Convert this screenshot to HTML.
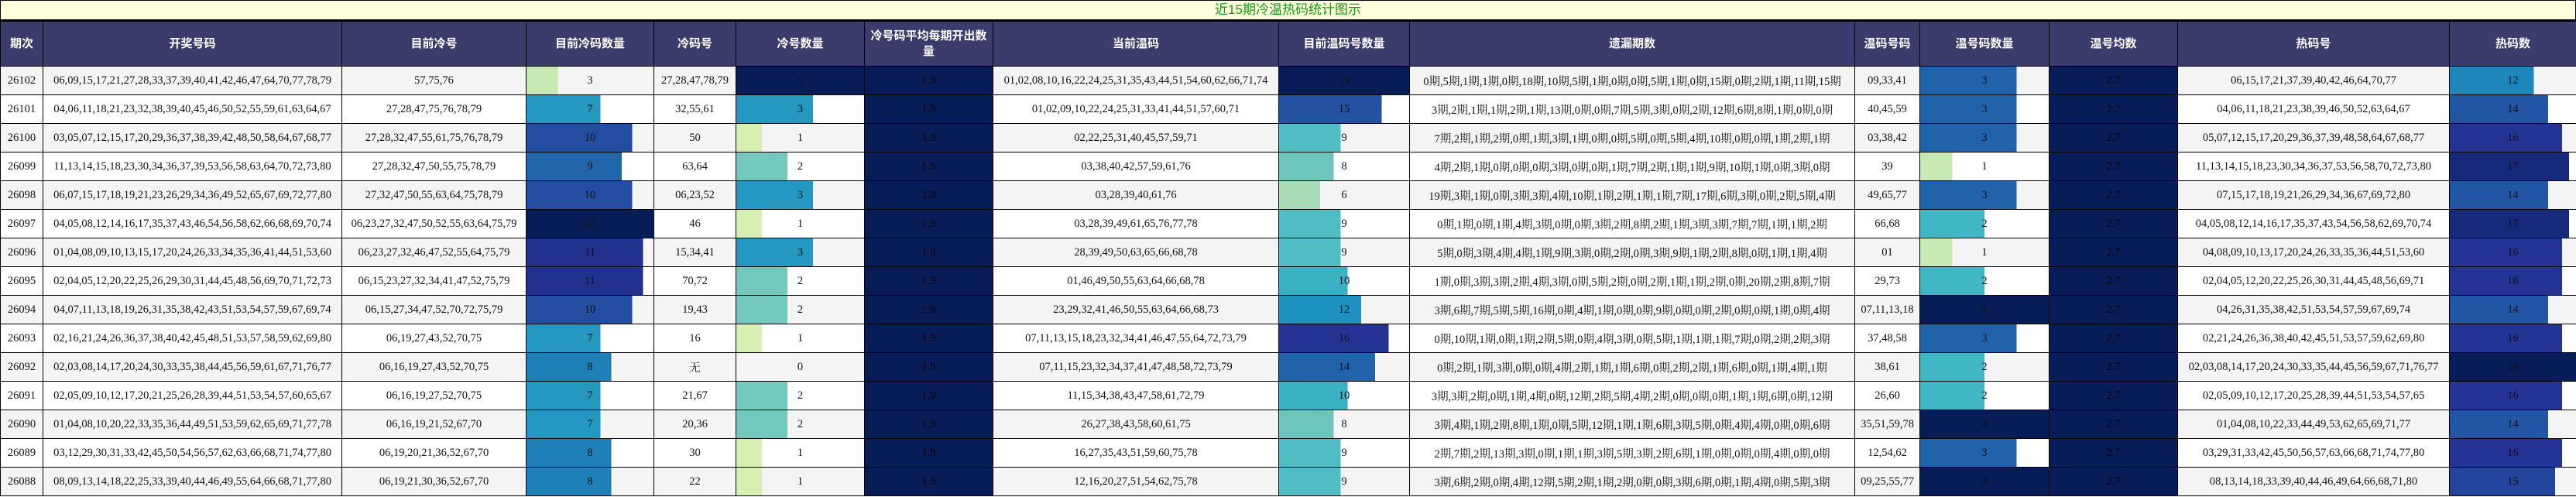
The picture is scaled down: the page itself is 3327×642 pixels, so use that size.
<!DOCTYPE html>
<html><head><meta charset="utf-8">
<style>
*{margin:0;padding:0;box-sizing:border-box}
body{width:3327px;height:642px;overflow:hidden;background:#fff;font-family:"Liberation Serif","Noto Serif CJK SC",serif}
.title{height:27px;background:#ffffdd;border:1px solid #000;border-bottom:2px solid #000;text-align:center;color:#119911;font:17px/24px "Liberation Sans","Noto Sans CJK SC",sans-serif}
table{border-collapse:collapse;table-layout:fixed;width:3327px}
th{height:58px;background:#3c3c6c;color:#fff;font:bold 15px/20px "Liberation Sans","Noto Sans CJK SC",sans-serif;border:1px solid #000;padding:0 4px}
td{height:37px;border:1px solid #000;text-align:center;font-size:14.5px;color:#111;white-space:nowrap;overflow:hidden;padding:0;background-repeat:no-repeat}
tr.g td{background-color:#f4f4f4}
tr.w td{background-color:#fff}
td.a{background-color:#081d58 !important;color:#000}
.c3{background-image:linear-gradient(90deg,#c7e9b4 25%,#0000 0)}
.c7{background-image:linear-gradient(90deg,#2498c1 58.3%,#0000 0)}
.c8{background-image:linear-gradient(90deg,#1f80b8 66.7%,#0000 0)}
.c9{background-image:linear-gradient(90deg,#2165ab 75%,#0000 0)}
.c10{background-image:linear-gradient(90deg,#234da0 83.3%,#0000 0)}
.c11{background-image:linear-gradient(90deg,#21318d 91.7%,#0000 0)}
.c12{background-image:linear-gradient(90deg,#081d58 100%,#0000 0)}
.n1{background-image:linear-gradient(90deg,#d6efb3 20%,#0000 0)}
.n2{background-image:linear-gradient(90deg,#73c9bd 40%,#0000 0)}
.n3{background-image:linear-gradient(90deg,#2498c1 60%,#0000 0)}
.n5{background-image:linear-gradient(90deg,#081d58 100%,#0000 0)}
.w6{background-image:linear-gradient(90deg,#a6dcb6 31.6%,#0000 0)}
.w8{background-image:linear-gradient(90deg,#6cc6be 42.1%,#0000 0)}
.w9{background-image:linear-gradient(90deg,#50bcc4 47.4%,#0000 0)}
.w10{background-image:linear-gradient(90deg,#3ab0c3 52.6%,#0000 0)}
.w12{background-image:linear-gradient(90deg,#1d91c0 63.2%,#0000 0)}
.w14{background-image:linear-gradient(90deg,#2163aa 73.7%,#0000 0)}
.w15{background-image:linear-gradient(90deg,#2352a3 78.9%,#0000 0)}
.w16{background-image:linear-gradient(90deg,#253494 84.2%,#0000 0)}
.w19{background-image:linear-gradient(90deg,#081d58 100%,#0000 0)}
.m1{background-image:linear-gradient(90deg,#c7e9b4 25%,#0000 0)}
.m2{background-image:linear-gradient(90deg,#41b6c4 50%,#0000 0)}
.m3{background-image:linear-gradient(90deg,#2163aa 75%,#0000 0)}
.m4{background-image:linear-gradient(90deg,#081d58 100%,#0000 0)}
.h12{background-image:linear-gradient(90deg,#1f86bb 66.7%,#0000 0)}
.h14{background-image:linear-gradient(90deg,#2255a4 77.8%,#0000 0)}
.h15{background-image:linear-gradient(90deg,#23449c 83.3%,#0000 0)}
.h16{background-image:linear-gradient(90deg,#253494 88.9%,#0000 0)}
.h17{background-image:linear-gradient(90deg,#17297a 94.4%,#0000 0)}
.h18{background-image:linear-gradient(90deg,#081d58 100%,#0000 0)}
</style></head><body>
<div class="title">近15期冷温热码统计图示</div>
<table>
<colgroup><col style="width:55px"><col style="width:386px"><col style="width:238px"><col style="width:165px"><col style="width:106px"><col style="width:166px"><col style="width:166px"><col style="width:369px"><col style="width:169px"><col style="width:575px"><col style="width:84px"><col style="width:167px"><col style="width:166px"><col style="width:351px"><col style="width:164px"></colgroup>
<tr><th>期次</th><th>开奖号码</th><th>目前冷号</th><th>目前冷码数量</th><th>冷码号</th><th>冷号数量</th><th>冷号码平均每期开出数量</th><th>当前温码</th><th>目前温码号数量</th><th>遗漏期数</th><th>温码号码</th><th>温号码数量</th><th>温号均数</th><th>热码号</th><th>热码数</th></tr>
<tr class="g"><td>26102</td><td>06,09,15,17,21,27,28,33,37,39,40,41,42,46,47,64,70,77,78,79</td><td>57,75,76</td><td class="c3">3</td><td>27,28,47,78,79</td><td class="n5">5</td><td class="a">1.9</td><td>01,02,08,10,16,22,24,25,31,35,43,44,51,54,60,62,66,71,74</td><td class="w19">19</td><td>0期,5期,1期,1期,0期,18期,10期,5期,1期,0期,0期,5期,1期,0期,15期,0期,2期,1期,11期,15期</td><td>09,33,41</td><td class="m3">3</td><td class="a">2.7</td><td>06,15,17,21,37,39,40,42,46,64,70,77</td><td class="h12">12</td></tr>
<tr class="w"><td>26101</td><td>04,06,11,18,21,23,32,38,39,40,45,46,50,52,55,59,61,63,64,67</td><td>27,28,47,75,76,78,79</td><td class="c7">7</td><td>32,55,61</td><td class="n3">3</td><td class="a">1.9</td><td>01,02,09,10,22,24,25,31,33,41,44,51,57,60,71</td><td class="w15">15</td><td>3期,2期,1期,1期,2期,1期,13期,0期,0期,7期,5期,3期,0期,2期,12期,6期,8期,1期,0期,0期</td><td>40,45,59</td><td class="m3">3</td><td class="a">2.7</td><td>04,06,11,18,21,23,38,39,46,50,52,63,64,67</td><td class="h14">14</td></tr>
<tr class="g"><td>26100</td><td>03,05,07,12,15,17,20,29,36,37,38,39,42,48,50,58,64,67,68,77</td><td>27,28,32,47,55,61,75,76,78,79</td><td class="c10">10</td><td>50</td><td class="n1">1</td><td class="a">1.9</td><td>02,22,25,31,40,45,57,59,71</td><td class="w9">9</td><td>7期,2期,1期,2期,0期,1期,3期,1期,0期,0期,5期,0期,5期,4期,10期,0期,0期,1期,2期,1期</td><td>03,38,42</td><td class="m3">3</td><td class="a">2.7</td><td>05,07,12,15,17,20,29,36,37,39,48,58,64,67,68,77</td><td class="h16">16</td></tr>
<tr class="w"><td>26099</td><td>11,13,14,15,18,23,30,34,36,37,39,53,56,58,63,64,70,72,73,80</td><td>27,28,32,47,50,55,75,78,79</td><td class="c9">9</td><td>63,64</td><td class="n2">2</td><td class="a">1.9</td><td>03,38,40,42,57,59,61,76</td><td class="w8">8</td><td>4期,2期,1期,0期,0期,0期,3期,0期,0期,1期,7期,2期,1期,1期,9期,10期,1期,0期,3期,0期</td><td>39</td><td class="m1">1</td><td class="a">2.7</td><td>11,13,14,15,18,23,30,34,36,37,53,56,58,70,72,73,80</td><td class="h17">17</td></tr>
<tr class="g"><td>26098</td><td>06,07,15,17,18,19,21,23,26,29,34,36,49,52,65,67,69,72,77,80</td><td>27,32,47,50,55,63,64,75,78,79</td><td class="c10">10</td><td>06,23,52</td><td class="n3">3</td><td class="a">1.9</td><td>03,28,39,40,61,76</td><td class="w6">6</td><td>19期,3期,1期,0期,3期,3期,4期,10期,1期,2期,1期,1期,7期,17期,6期,3期,0期,2期,5期,4期</td><td>49,65,77</td><td class="m3">3</td><td class="a">2.7</td><td>07,15,17,18,19,21,26,29,34,36,67,69,72,80</td><td class="h14">14</td></tr>
<tr class="w"><td>26097</td><td>04,05,08,12,14,16,17,35,37,43,46,54,56,58,62,66,68,69,70,74</td><td>06,23,27,32,47,50,52,55,63,64,75,79</td><td class="c12">12</td><td>46</td><td class="n1">1</td><td class="a">1.9</td><td>03,28,39,49,61,65,76,77,78</td><td class="w9">9</td><td>0期,1期,0期,1期,4期,3期,0期,0期,3期,2期,8期,2期,1期,3期,3期,7期,7期,1期,1期,2期</td><td>66,68</td><td class="m2">2</td><td class="a">2.7</td><td>04,05,08,12,14,16,17,35,37,43,54,56,58,62,69,70,74</td><td class="h17">17</td></tr>
<tr class="g"><td>26096</td><td>01,04,08,09,10,13,15,17,20,24,26,33,34,35,36,41,44,51,53,60</td><td>06,23,27,32,46,47,52,55,64,75,79</td><td class="c11">11</td><td>15,34,41</td><td class="n3">3</td><td class="a">1.9</td><td>28,39,49,50,63,65,66,68,78</td><td class="w9">9</td><td>5期,0期,3期,4期,4期,1期,9期,3期,0期,2期,0期,3期,9期,1期,2期,8期,0期,1期,1期,4期</td><td>01</td><td class="m1">1</td><td class="a">2.7</td><td>04,08,09,10,13,17,20,24,26,33,35,36,44,51,53,60</td><td class="h16">16</td></tr>
<tr class="w"><td>26095</td><td>02,04,05,12,20,22,25,26,29,30,31,44,45,48,56,69,70,71,72,73</td><td>06,15,23,27,32,34,41,47,52,75,79</td><td class="c11">11</td><td>70,72</td><td class="n2">2</td><td class="a">1.9</td><td>01,46,49,50,55,63,64,66,68,78</td><td class="w10">10</td><td>1期,0期,3期,3期,2期,4期,3期,0期,5期,2期,0期,2期,1期,1期,2期,0期,20期,2期,8期,7期</td><td>29,73</td><td class="m2">2</td><td class="a">2.7</td><td>02,04,05,12,20,22,25,26,30,31,44,45,48,56,69,71</td><td class="h16">16</td></tr>
<tr class="g"><td>26094</td><td>04,07,11,13,18,19,26,31,35,38,42,43,51,53,54,57,59,67,69,74</td><td>06,15,27,34,47,52,70,72,75,79</td><td class="c10">10</td><td>19,43</td><td class="n2">2</td><td class="a">1.9</td><td>23,29,32,41,46,50,55,63,64,66,68,73</td><td class="w12">12</td><td>3期,6期,7期,5期,5期,16期,0期,4期,1期,0期,0期,9期,0期,0期,2期,0期,0期,1期,0期,4期</td><td>07,11,13,18</td><td class="m4">4</td><td class="a">2.7</td><td>04,26,31,35,38,42,51,53,54,57,59,67,69,74</td><td class="h14">14</td></tr>
<tr class="w"><td>26093</td><td>02,16,21,24,26,36,37,38,40,42,45,48,51,53,57,58,59,62,69,80</td><td>06,19,27,43,52,70,75</td><td class="c7">7</td><td>16</td><td class="n1">1</td><td class="a">1.9</td><td>07,11,13,15,18,23,32,34,41,46,47,55,64,72,73,79</td><td class="w16">16</td><td>0期,10期,1期,0期,1期,2期,5期,0期,4期,3期,0期,5期,1期,1期,1期,7期,0期,2期,2期,3期</td><td>37,48,58</td><td class="m3">3</td><td class="a">2.7</td><td>02,21,24,26,36,38,40,42,45,51,53,57,59,62,69,80</td><td class="h16">16</td></tr>
<tr class="g"><td>26092</td><td>02,03,08,14,17,20,24,30,33,35,38,44,45,56,59,61,67,71,76,77</td><td>06,16,19,27,43,52,70,75</td><td class="c8">8</td><td>无</td><td>0</td><td class="a">1.9</td><td>07,11,15,23,32,34,37,41,47,48,58,72,73,79</td><td class="w14">14</td><td>0期,2期,1期,3期,0期,0期,4期,2期,1期,1期,6期,0期,2期,2期,1期,6期,0期,1期,4期,1期</td><td>38,61</td><td class="m2">2</td><td class="a">2.7</td><td>02,03,08,14,17,20,24,30,33,35,44,45,56,59,67,71,76,77</td><td class="h18">18</td></tr>
<tr class="w"><td>26091</td><td>02,05,09,10,12,17,20,21,25,26,28,39,44,51,53,54,57,60,65,67</td><td>06,16,19,27,52,70,75</td><td class="c7">7</td><td>21,67</td><td class="n2">2</td><td class="a">1.9</td><td>11,15,34,38,43,47,58,61,72,79</td><td class="w10">10</td><td>3期,3期,2期,0期,1期,4期,0期,12期,2期,5期,4期,2期,0期,0期,0期,1期,1期,6期,0期,12期</td><td>26,60</td><td class="m2">2</td><td class="a">2.7</td><td>02,05,09,10,12,17,20,25,28,39,44,51,53,54,57,65</td><td class="h16">16</td></tr>
<tr class="g"><td>26090</td><td>01,04,08,10,20,22,33,35,36,44,49,51,53,59,62,65,69,71,77,78</td><td>06,16,19,21,52,67,70</td><td class="c7">7</td><td>20,36</td><td class="n2">2</td><td class="a">1.9</td><td>26,27,38,43,58,60,61,75</td><td class="w8">8</td><td>3期,4期,1期,2期,8期,1期,0期,5期,12期,1期,1期,6期,3期,5期,0期,4期,4期,0期,0期,6期</td><td>35,51,59,78</td><td class="m4">4</td><td class="a">2.7</td><td>01,04,08,10,22,33,44,49,53,62,65,69,71,77</td><td class="h14">14</td></tr>
<tr class="w"><td>26089</td><td>03,12,29,30,31,33,42,45,50,54,56,57,62,63,66,68,71,74,77,80</td><td>06,19,20,21,36,52,67,70</td><td class="c8">8</td><td>30</td><td class="n1">1</td><td class="a">1.9</td><td>16,27,35,43,51,59,60,75,78</td><td class="w9">9</td><td>2期,7期,2期,13期,3期,0期,1期,1期,3期,5期,3期,2期,6期,1期,0期,0期,0期,4期,0期,0期</td><td>12,54,62</td><td class="m3">3</td><td class="a">2.7</td><td>03,29,31,33,42,45,50,56,57,63,66,68,71,74,77,80</td><td class="h16">16</td></tr>
<tr class="g"><td>26088</td><td>08,09,13,14,18,22,25,33,39,40,44,46,49,55,64,66,68,71,77,80</td><td>06,19,21,30,36,52,67,70</td><td class="c8">8</td><td>22</td><td class="n1">1</td><td class="a">1.9</td><td>12,16,20,27,51,54,62,75,78</td><td class="w9">9</td><td>3期,6期,2期,0期,4期,12期,5期,2期,1期,2期,0期,0期,3期,6期,0期,1期,4期,0期,5期,3期</td><td>09,25,55,77</td><td class="m4">4</td><td class="a">2.7</td><td>08,13,14,18,33,39,40,44,46,49,64,66,68,71,80</td><td class="h15">15</td></tr>
</table>
</body></html>
